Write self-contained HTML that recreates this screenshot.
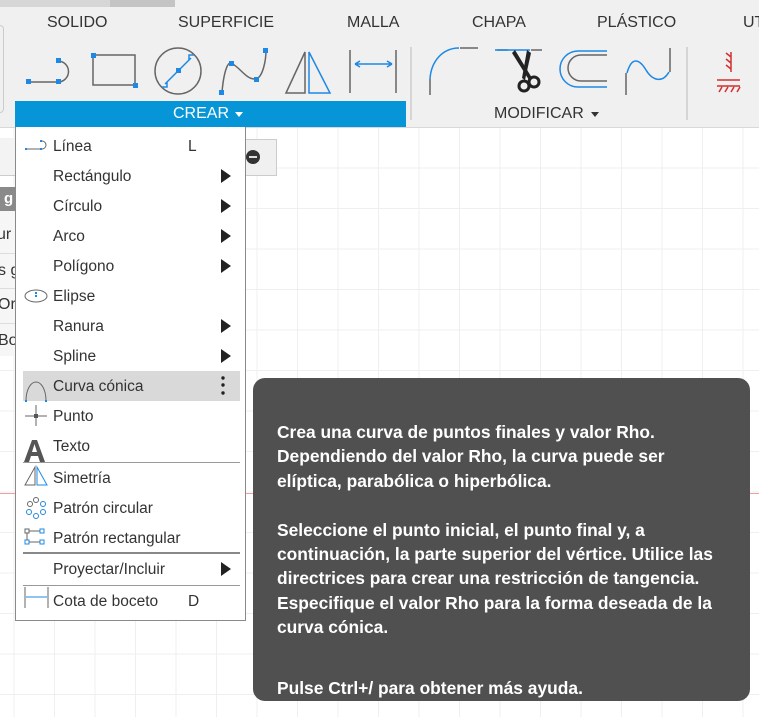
<!DOCTYPE html>
<html><head><meta charset="utf-8"><style>
*{margin:0;padding:0;box-sizing:border-box}
body{width:759px;height:717px;overflow:hidden;position:relative;background:#fff;font-family:"Liberation Sans",Arial,sans-serif;}
.grid{position:absolute;left:0;top:128px;width:759px;height:589px;
background-image:linear-gradient(#efefef 1px,transparent 1px),linear-gradient(90deg,#efefef 1px,transparent 1px);
background-size:40.5px 40.5px;background-position:13.5px 39.5px;}
.red{position:absolute;left:0;top:493px;width:759px;height:1px;background:#f0a0a0}
.tb{position:absolute;left:0;top:0;width:759px;height:128px;background:#f0f0f0;border-bottom:1px solid #d8d8d8}
.tab{position:absolute;top:14px;font-size:16px;color:#333}
.abs{position:absolute}
.menu{position:absolute;left:15px;top:127px;width:231px;height:494px;background:#fff;border:1px solid #8a8a8a;border-top:none}
.it{position:absolute;left:37px;font-size:15.5px;color:#333;margin-top:1px}
.arr{position:absolute;left:205px;width:0;height:0;border-left:10px solid #222;border-top:7px solid transparent;border-bottom:7px solid transparent}
.tip{position:absolute;left:253px;top:378px;width:497px;height:323px;background:#505050;border-radius:12px;color:#fff;font-weight:bold;font-size:17.4px;line-height:24.4px;padding:42px 0 0 24px;white-space:nowrap}
</style></head><body>
<div class="grid"></div>
<div class="red"></div>
<div class="abs" style="left:0;top:138px;width:15px;height:38px;background:#f3f3f3;border-bottom:1px solid #ccc"></div>
<div class="abs" style="left:0;top:187px;width:15px;height:24px;background:#8a8a8a;color:#fff;font-weight:bold;font-size:15px;line-height:24px;padding-left:4px">g</div>
<div class="abs" style="left:0;top:211px;width:15px;height:145px;background:#f6f6f6"></div>
<div class="abs" style="left:-3px;top:226px;font-size:16px;color:#333">ur</div>
<div class="abs" style="left:-2px;top:262px;font-size:16px;color:#333">s g</div>
<div class="abs" style="left:-2px;top:296px;font-size:16px;color:#333">Or</div>
<div class="abs" style="left:-2px;top:332px;font-size:16px;color:#333">Bo</div>
<div class="abs" style="left:0;top:253px;width:15px;height:1px;background:#ddd"></div>
<div class="abs" style="left:0;top:288px;width:15px;height:1px;background:#ddd"></div>
<div class="abs" style="left:0;top:323px;width:15px;height:1px;background:#ddd"></div>
<div class="abs" style="left:240px;top:139px;width:37px;height:37px;background:#f0f0f0;border:1px solid #ccc;border-left:none"></div>
<div class="abs" style="left:246px;top:150px;width:14px;height:14px;border-radius:50%;background:#333"><div style="position:absolute;left:3px;top:6px;width:8px;height:2px;background:#ddd"></div></div>

<div class="tb">
 <div class="abs" style="left:0;top:0;width:110px;height:7px;background:#d6d6d6"></div>
 <div class="abs" style="left:110px;top:0;width:65px;height:7px;background:#c4c4c4"></div>
 <div class="abs" style="left:0;top:25px;width:4px;height:88px;border:1px solid #ccc;border-left:none;border-radius:0 4px 4px 0"></div>
 <div class="tab" style="left:47px">SOLIDO</div>
 <div class="tab" style="left:178px">SUPERFICIE</div>
 <div class="tab" style="left:347px">MALLA</div>
 <div class="tab" style="left:472px">CHAPA</div>
 <div class="tab" style="left:597px">PLÁSTICO</div>
 <div class="tab" style="left:743px">UT</div>
 <svg class="abs" style="left:0;top:0" width="759" height="128">
  <g fill="none" stroke="#666" stroke-width="1.5">
   <path d="M29 82H58M58 61a10 10 0 0 1 0 21"/>
   <rect x="93" y="55" width="42" height="30"/>
   <circle cx="178" cy="71" r="23"/>
   <path d="M222 92C224 70 228 62 231 63C240 67 246 80 256 79C263 77 266 60 266 50"/>
   <path d="M286 93L305 52V93Z"/>
   <path d="M350 50V93M396 50V93"/>
   <path d="M460 48H478M430 79V95M497 50H508M531 50H542M670 48V72M626 73V95"/>
   <path d="M581 55H607M581 81H607M581 55a13 13 0 0 0 0 26"/>
   <line x1="411" y1="47" x2="411" y2="120" stroke="#ccc"/><line x1="687" y1="47" x2="687" y2="120" stroke="#ccc"/>
  </g>
  <g fill="none" stroke="#1e88e5" stroke-width="1.5">
   <path d="M165 84L191 58M162 87l5 0-0-5M194 55l-5 0 0 5"/>
   <path d="M309 52V93H330Z"/>
   <path d="M355 64H392M355 64l5-3M355 64l5 3M392 64l-5-3M392 64l-5 3"/>
   <path d="M430 79C431 62 442 48 459 48M495 50H530M607 51H578a17 17 0 0 0 0 36H607M627 73C632 55 640 60 646 70C652 80 662 84 669 72"/>
  </g>
  <g fill="#1e88e5"><rect x="26" y="79" width="5" height="5"/><rect x="56" y="79" width="5" height="5"/><rect x="56" y="58" width="5" height="5"/><rect x="91" y="53" width="5" height="5"/><rect x="133" y="83" width="5" height="5"/><rect x="176" y="68" width="5" height="5"/><rect x="219" y="90" width="5" height="5"/><rect x="229" y="61" width="5" height="5"/><rect x="254" y="77" width="5" height="5"/><rect x="263" y="48" width="5" height="5"/></g>
  <g fill="#222"><path d="M515 50L532 78L529 80L512 53Z"/><path d="M527 50L522 78L525 80L531 53Z"/><circle cx="524" cy="86" r="5" fill="none" stroke="#222" stroke-width="3"/><circle cx="534" cy="82" r="5" fill="none" stroke="#222" stroke-width="3"/></g>
  <g stroke="#d32f2f" stroke-width="1.5" fill="none"><path d="M731 52V72M726 53l5 4M726 59l5 4M726 65l5 4M717 80H740M717 86H740M719 92l3-5M725 92l3-5M731 92l3-5M737 92l3-5"/></g>
  <rect x="15" y="101" width="391" height="26" fill="#0696d7"/>
  <path d="M591 112h8l-4 5z" fill="#333"/>
 </svg>
 <div class="abs" style="left:173px;top:105px;color:#fff;font-size:16px">CREAR</div>
 <svg class="abs" style="left:235px;top:112px" width="9" height="6"><path d="M0 0h8l-4 5z" fill="#fff"/></svg>
 <div class="abs" style="left:494px;top:105px;color:#333;font-size:16px">MODIFICAR</div>
</div>

<div class="menu">
 <svg class="abs" style="left:0;top:0" width="231" height="494">
  <rect x="7" y="244" width="217" height="30" fill="#d9d9d9"/>
  <g fill="none" stroke="#666" stroke-width="1">
   <path d="M10 22H26M26 14a4 4 0 0 1 0 8"/>
   <ellipse cx="20" cy="169" rx="11" ry="6"/>
   <path d="M10 274C10 262 15 255 20 255C25 255 30 262 30 274"/>
   <path d="M9 289H31M20 278V299"/>
   <path d="M9 358L19 340V358Z"/>
   <circle cx="14" cy="377" r="2.5"/><circle cx="20" cy="373" r="2.5"/>
   <path d="M9 460V481M32 460V481"/>
  </g>
  <g fill="none" stroke="#1e88e5" stroke-width="1">
   <path d="M21 358V340L31 358Z"/>
   <circle cx="27" cy="377" r="2.5"/><circle cx="27" cy="385" r="2.5"/><circle cx="20" cy="389" r="2.5"/><circle cx="13" cy="385" r="2.5"/>
   <rect x="9" y="402" width="4" height="4" stroke="#666"/><rect x="24" y="402" width="4" height="4"/><rect x="9" y="413" width="4" height="4"/><rect x="24" y="413" width="4" height="4"/>
   <path d="M13 404H24M11 406V413M13 415H24" stroke="#666"/>
   <path d="M10 470H31"/>
  </g>
  <g fill="#1e88e5"><rect x="9" y="21" width="2" height="2"/><rect x="24" y="21" width="2" height="2"/><rect x="24" y="13" width="2" height="2"/><rect x="19" y="165" width="2" height="2"/><rect x="19" y="168" width="2" height="2"/><rect x="9" y="273" width="2" height="2"/><rect x="29" y="273" width="2" height="2"/></g>
  <rect x="18" y="287" width="4" height="4" fill="#555"/>
  <g fill="#222"><circle cx="207" cy="251" r="1.7"/><circle cx="207" cy="258" r="1.7"/><circle cx="207" cy="266" r="1.7"/></g>
  <path d="M8 335L16 313H21L29 335H24L22 329H15L13 335ZM16 325H21L18.5 317Z" fill="#555"/>
  <line x1="7" y1="335.5" x2="224" y2="335.5" stroke="#999"/>
  <line x1="7" y1="426" x2="224" y2="426" stroke="#888" stroke-width="2"/>
  <line x1="7" y1="458.5" x2="224" y2="458.5" stroke="#999"/>
 </svg>
 <div class="it" style="top:10px">Línea</div><div class="abs" style="left:172px;top:11px;font-size:15.5px;color:#333">L</div>
 <div class="it" style="top:40px">Rectángulo</div><div class="arr" style="top:42px"></div>
 <div class="it" style="top:70px">Círculo</div><div class="arr" style="top:72px"></div>
 <div class="it" style="top:100px">Arco</div><div class="arr" style="top:102px"></div>
 <div class="it" style="top:130px">Polígono</div><div class="arr" style="top:132px"></div>
 <div class="it" style="top:160px">Elipse</div>
 <div class="it" style="top:190px">Ranura</div><div class="arr" style="top:192px"></div>
 <div class="it" style="top:220px">Spline</div><div class="arr" style="top:222px"></div>
 <div class="it" style="top:250px">Curva cónica</div>
 <div class="it" style="top:280px">Punto</div>
 <div class="it" style="top:310px">Texto</div>
 <div class="it" style="top:342px">Simetría</div>
 <div class="it" style="top:372px">Patrón circular</div>
 <div class="it" style="top:402px">Patrón rectangular</div>
 <div class="it" style="top:433px">Proyectar/Incluir</div><div class="arr" style="top:435px"></div>
 <div class="it" style="top:465px">Cota de boceto</div><div class="abs" style="left:172px;top:466px;font-size:15.5px;color:#333">D</div>
</div>

<div class="tip">Crea una curva de puntos finales y valor Rho.<br>Dependiendo del valor Rho, la curva puede ser<br>elíptica, parabólica o hiperbólica.<br><br>Seleccione el punto inicial, el punto final y, a<br>continuación, la parte superior del vértice. Utilice las<br>directrices para crear una restricción de tangencia.<br>Especifique el valor Rho para la forma deseada de la<br>curva cónica.<div style="height:36px"></div>Pulse Ctrl+/ para obtener más ayuda.</div>
</body></html>
